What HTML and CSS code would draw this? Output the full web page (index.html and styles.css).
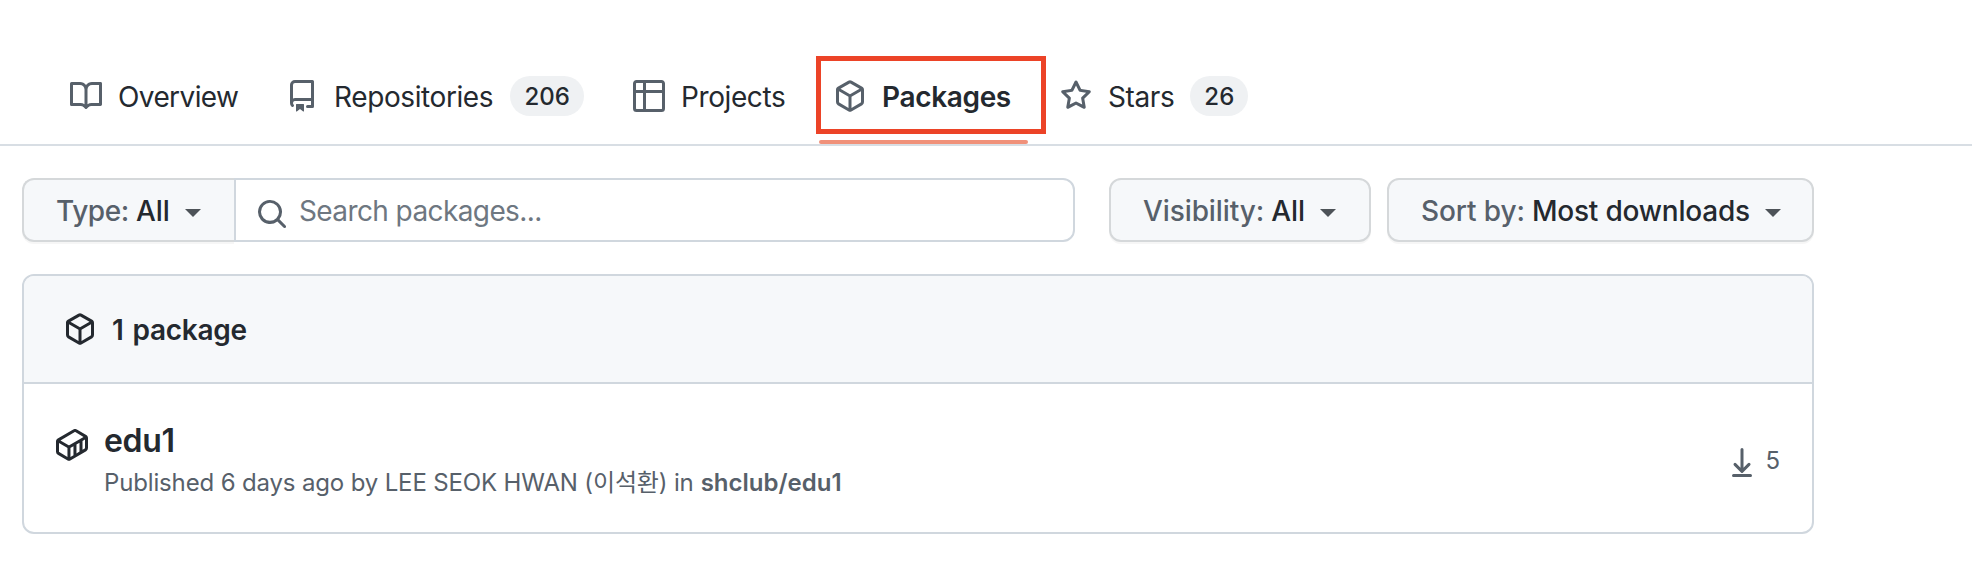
FILE: index.html
```html
<!DOCTYPE html>
<html lang="en">
<head>
<meta charset="utf-8">
<title>Packages</title>
<link rel="stylesheet" href="styles.css">
</head>
<body>
<svg class="defs" width="0" height="0">
  <symbol id="package" viewBox="0 0 16 16"><path d="m8.878.392 5.25 3.045c.54.314.872.89.872 1.514v6.098a1.75 1.75 0 0 1-.872 1.514l-5.25 3.045a1.75 1.75 0 0 1-1.756 0l-5.25-3.045A1.75 1.75 0 0 1 1 11.049V4.951c0-.624.332-1.201.872-1.514L7.122.392a1.75 1.75 0 0 1 1.756 0ZM7.875 1.69l-4.63 2.685L8 7.133l4.755-2.758-4.63-2.685a.248.248 0 0 0-.25 0ZM2.5 5.677v5.372c0 .09.047.171.125.216l4.625 2.683V8.432Zm6.25 8.271 4.625-2.683a.25.25 0 0 0 .125-.216V5.677L8.75 8.432Z"/></symbol>
</svg>
<nav class="tabs">
  <a class="tab tab-overview">
    <svg class="icon" viewBox="0 0 16 16"><path d="M0 1.75A.75.75 0 0 1 .75 1h4.253c1.227 0 2.317.59 3 1.501A3.743 3.743 0 0 1 11.006 1h4.245a.75.75 0 0 1 .75.75v10.5a.75.75 0 0 1-.75.75h-4.507a2.25 2.25 0 0 0-1.591.659l-.622.621a.75.75 0 0 1-1.06 0l-.622-.621A2.25 2.25 0 0 0 5.258 13H.75a.75.75 0 0 1-.75-.75Zm7.251 10.324.004-5.073-.002-2.253A2.25 2.25 0 0 0 5.003 2.5H1.5v9h3.757a3.75 3.75 0 0 1 1.994.574ZM8.755 4.75l-.004 7.322a3.752 3.752 0 0 1 1.992-.572H14.5v-9h-3.495a2.25 2.25 0 0 0-2.25 2.25Z"/></svg>
    <span class="label">Overview</span>
  </a>
  <a class="tab tab-repos">
    <svg class="icon" viewBox="0 0 16 16"><path d="M2 2.5A2.5 2.5 0 0 1 4.5 0h8.75a.75.75 0 0 1 .75.75v12.5a.75.75 0 0 1-.75.75h-2.5a.75.75 0 0 1 0-1.5h1.75v-2h-8a1 1 0 0 0-.714 1.7.75.75 0 1 1-1.072 1.05A2.495 2.495 0 0 1 2 11.5Zm10.5-1h-8a1 1 0 0 0-1 1v6.708A2.486 2.486 0 0 1 4.5 9h8ZM5 12.25a.25.25 0 0 1 .25-.25h3.5a.25.25 0 0 1 .25.25v3.25a.25.25 0 0 1-.4.2l-1.45-1.087a.249.249 0 0 0-.3 0L5.4 15.7a.25.25 0 0 1-.4-.2Z"/></svg>
    <span class="label">Repositories</span>
    <span class="count count-repos">206</span>
  </a>
  <a class="tab tab-projects">
    <svg class="icon" viewBox="0 0 16 16"><path d="M0 1.75C0 .784.784 0 1.75 0h12.5C15.216 0 16 .784 16 1.75v12.5A1.75 1.75 0 0 1 14.25 16H1.75A1.75 1.75 0 0 1 0 14.25ZM6.5 6.5v8h7.75a.25.25 0 0 0 .25-.25V6.5Zm8-1.5V1.75a.25.25 0 0 0-.25-.25H6.5V5Zm-13 1.5v7.75c0 .138.112.25.25.25H5v-8ZM5 5V1.5H1.75a.25.25 0 0 0-.25.25V5Z"/></svg>
    <span class="label">Projects</span>
  </a>
  <a class="tab tab-packages">
    <svg class="icon"><use href="#package"/></svg>
    <span class="label">Packages</span>
    <span class="highlight"></span>
  </a>
  <a class="tab tab-stars">
    <svg class="icon" viewBox="0 0 16 16"><path d="M8 .25a.75.75 0 0 1 .673.418l1.882 3.815 4.21.612a.75.75 0 0 1 .416 1.279l-3.046 2.97.719 4.192a.751.751 0 0 1-1.088.791L8 12.347l-3.766 1.98a.75.75 0 0 1-1.088-.79l.72-4.194L.818 6.374a.75.75 0 0 1 .416-1.28l4.21-.611L7.327.668A.75.75 0 0 1 8 .25Zm0 2.445L6.615 5.5a.75.75 0 0 1-.564.41l-3.097.45 2.24 2.184a.75.75 0 0 1 .216.664l-.528 3.084 2.769-1.456a.75.75 0 0 1 .698 0l2.77 1.456-.53-3.084a.75.75 0 0 1 .216-.664l2.24-2.183-3.096-.45a.75.75 0 0 1-.564-.41Z"/></svg>
    <span class="label">Stars</span>
    <span class="count count-stars">26</span>
  </a>
</nav>
<main class="content">
  <div class="filters">
    <div class="search-group">
      <button class="button type"><span class="key">Type:</span><span class="value">All</span><i class="caret"></i></button>
      <div class="search">
        <svg class="icon" viewBox="0 0 16 16"><path d="M10.68 11.74a6 6 0 0 1-7.922-8.982 6 6 0 0 1 8.982 7.922l3.04 3.04a.749.749 0 0 1-.326 1.275.749.749 0 0 1-.734-.215ZM11.5 7a4.499 4.499 0 1 0-8.997 0A4.499 4.499 0 0 0 11.5 7Z"/></svg>
        <span class="placeholder">Search packages...</span>
      </div>
    </div>
    <button class="button visibility"><span class="key">Visibility:</span><span class="value">All</span><i class="caret"></i></button>
    <button class="button sort"><span class="key">Sort by:</span><span class="value">Most downloads</span><i class="caret"></i></button>
  </div>
  <section class="box">
    <header class="box-header">
      <svg class="icon"><use href="#package"/></svg>
      <span class="total">1 package</span>
    </header>
    <div class="row">
      <svg class="icon" viewBox="0 0 16 16"><path d="m10.41.24 4.711 2.774c.544.316.878.897.879 1.526v5.01a1.77 1.77 0 0 1-.88 1.53l-7.753 4.521-.002.001a1.769 1.769 0 0 1-1.774 0H5.59L.873 12.85A1.762 1.762 0 0 1 0 11.327V6.292c0-.304.078-.598.22-.855l.004-.005.01-.019c.15-.262.369-.486.64-.643L8.641.239a1.752 1.752 0 0 1 1.765 0l.002.001ZM9.397 1.534l-7.17 4.182 4.116 2.388a.27.27 0 0 0 .269 0l7.152-4.148-4.115-2.422a.252.252 0 0 0-.252 0Zm-7.768 10.02 4.1 2.393V9.474a1.807 1.807 0 0 1-.138-.072L1.5 7.029v4.298c0 .095.05.181.129.227Zm8.6.642 1.521-.887v-4.45l-1.521.882ZM7.365 9.402h.001c-.044.026-.09.049-.136.071v4.472l1.5-.875V8.61Zm5.885 1.032 1.115-.65h.002a.267.267 0 0 0 .133-.232V5.264l-1.25.725Z"/></svg>
      <div class="details">
        <a class="name">edu1</a>
        <p class="meta"><span class="by">Published 6 days ago by LEE SEOK HWAN (<span class="ko" lang="ko">이석환</span>) in</span><b class="repo">shclub/edu1</b></p>
      </div>
      <div class="downloads">
        <svg class="icon" viewBox="0 0 16 16"><path d="M7.25 1.75a.75.75 0 0 1 1.5 0v9.1l2.22-2.22a.75.75 0 1 1 1.06 1.06l-3.5 3.5a.75.75 0 0 1-1.06 0l-3.5-3.5a.75.75 0 0 1 1.06-1.06l2.22 2.22ZM3.75 14h8.5a.75.75 0 0 1 0 1.5h-8.5a.75.75 0 0 1 0-1.5Z"/></svg>
        <span>5</span>
      </div>
    </div>
  </section>
</main>
</body>
</html>
```
FILE: styles.css
```css
* { box-sizing: border-box; }
body {
  margin: 0;
  height: 572px;
  background: #fff;
  color: #24292f;
  font-family: Inter, "Noto Sans CJK KR", sans-serif;
  font-size: 28px;
  line-height: 40px;
  white-space: nowrap;
  overflow: hidden;
}
.defs { display: block; }
.icon { display: block; width: 32px; height: 32px; flex: none; fill: #57606a; }
.tabs {
  display: flex;
  height: 146px;
  padding: 76px 0 0 70px;
  border-bottom: 2px solid #d8dee4;
}
.tab { position: relative; display: flex; align-items: center; height: 40px; gap: 16px; flex: none; }
.tab-overview { width: 216px; }
.tab-repos { width: 347px; }
.tab-projects { width: 201px; }
.tab-packages { width: 226px; font-weight: 600; }
.label { padding-top: 1px; letter-spacing: -0.4px; }
.tab-overview .label { letter-spacing: -0.6px; }
.tab-packages .label { letter-spacing: -0.35px; }
.count {
  height: 40px;
  border-radius: 20px;
  background: #eff1f3;
  font-size: 24px;
  line-height: 42px;
  font-weight: 500;
  text-align: center;
}
.count-repos { width: 74px; margin-left: 1px; }
.count-stars { width: 58px; }
.tab-packages::after {
  content: "";
  position: absolute;
  left: -15px;
  top: 64px;
  width: 209px;
  height: 4px;
  border-radius: 2px;
  background: #f0917a;
}
.highlight {
  position: absolute;
  left: -18.5px;
  top: -20px;
  width: 230px;
  height: 78px;
  border: 5px solid #ec4327;
}
.content { width: 1792px; margin-left: 22px; padding-top: 32px; }
.filters { display: flex; height: 64px; }
.search-group { display: flex; flex: none; width: 1053px; margin-right: 34px; }
.button {
  display: flex;
  flex: none;
  align-items: center;
  height: 64px;
  padding: 1px 0 0 32px;
  border: 2px solid #d5d8da;
  border-radius: 12px;
  background: #f6f8fa;
  box-shadow: 0 2px 0 rgba(27, 31, 36, 0.04);
  color: #24292f;
  font: 500 28px/40px Inter, sans-serif;
}
.key { margin-right: 7px; color: #57606a; letter-spacing: -0.1px; }
.caret {
  width: 0;
  height: 0;
  margin: 4px 0 0 15px;
  border: 8px solid transparent;
  border-top-color: #4d5358;
  border-bottom: 0;
}
.type { width: 212px; border-radius: 12px 0 0 12px; border-right: 0; }
.type .key { letter-spacing: -0.4px; }
.visibility { width: 262px; margin-right: 16px; }
.sort { width: 427px; }
.sort .value { letter-spacing: -0.2px; }
.search {
  display: flex;
  flex: 1;
  align-items: center;
  padding-left: 20px;
  border: 2px solid #d0d7de;
  border-radius: 0 12px 12px 0;
}
.search .icon { margin: 7px 11px 0 0; }
.placeholder { padding-top: 1px; color: #6e7781; letter-spacing: -0.6px; }
.box { height: 260px; margin-top: 32px; border: 2px solid #d0d7de; border-radius: 12px; overflow: hidden; }
.box-header {
  display: flex;
  align-items: center;
  gap: 16px;
  height: 108px;
  padding-left: 40px;
  border-bottom: 2px solid #d0d7de;
  background: #f6f8fa;
  font-weight: 600;
}
.total { padding-top: 1px; word-spacing: 2px; letter-spacing: -0.25px; }
.box .icon { fill: #24292f; }
.row { display: flex; padding: 36px 32px 0; }
.row > .icon { margin-top: 9px; }
.details { flex: 1; margin-left: 16px; }
.name { display: block; font-size: 32px; font-weight: 600; line-height: 42px; letter-spacing: -0.3px; }
.meta { display: flex; gap: 7px; margin: 3px 0 0; font-size: 24px; line-height: 36px; color: #57606a; }
.by { letter-spacing: -0.15px; }
.repo { font-weight: 600; }
.downloads { display: flex; gap: 7px; margin-top: 20px; color: #57606a; font-size: 24px; line-height: 41px; }
.downloads .icon { margin-top: 6px; fill: #57606a; }
```
